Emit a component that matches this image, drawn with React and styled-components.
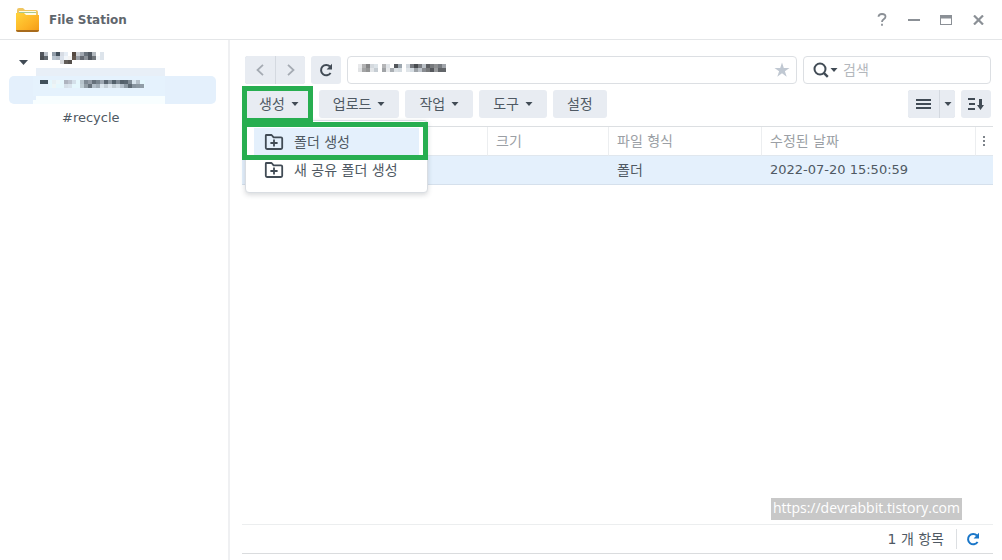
import React from "react";
import styled, { createGlobalStyle } from "styled-components";

const Global = createGlobalStyle`
  *, *::before, *::after { box-sizing: border-box; }
  body {
    margin: 0;
    background: #fff;
    color: #4f5963;
    font-family: "DejaVu Sans", "Noto Sans CJK KR", sans-serif;
    font-size: 14px;
    line-height: 20px;
  }
  button, input { font: inherit; color: inherit; margin: 0; }
  button { border: 0; padding: 0; background: none; cursor: pointer; }
  svg { display: block; flex: none; }
`;

const Window = styled.div`
  min-height: 100vh;
  display: flex;
  flex-direction: column;
`;

const TitleBar = styled.header`
  display: flex;
  align-items: center;
  height: 40px;
  padding: 0 8px 0 15px;
  border-bottom: 1px solid #e4e6e8;
`;

const Title = styled.h1`
  margin: 0 auto 0 10px;
  font-size: 12px;
  font-weight: bold;
  color: #5f666d;
`;

const WindowButton = styled.button`
  display: flex;
  align-items: center;
  justify-content: center;
  width: 32px;
  height: 32px;
  color: #8b9096;
`;

const Body = styled.div`
  flex: 1;
  display: flex;
`;

const Sidebar = styled.nav`
  flex: none;
  width: 230px;
  padding: 8px 12px 0 9px;
  border-right: 2px solid #eff0f2;
`;

const TreeList = styled.ul`
  list-style: none;
  margin: 0;
  padding: 0;
`;

const TreeItem = styled.a`
  position: relative;
  display: flex;
  align-items: center;
  height: 28px;
  padding-left: ${(p) => p.$indent}px;
  border-radius: 5px;
  background: ${(p) => (p.$selected ? "#e4f0fc" : "transparent")};
  color: #4f5963;
  font-size: 13px;
  text-decoration: none;
`;

const TreeCaret = styled.span`
  display: flex;
  width: 21px;
`;

const TreeName = styled.span`
  position: relative;
  padding-bottom: ${(p) => p.$lift}px;
`;

const Veil = styled.svg`
  position: absolute;
  left: 24px;
  bottom: 0;
`;

const Main = styled.main`
  flex: 1;
  min-width: 0;
  display: flex;
  flex-direction: column;
  padding: 16px 9px 6px 12px;
`;

const Toolbars = styled.div`
  display: grid;
  gap: 6px;
  padding: 0 2px 8px 3px;
`;

const Toolbar = styled.div`
  display: flex;
  gap: 6px;
  height: 28px;
`;

const Group = styled.div`
  display: flex;
  gap: 1px;
  border-radius: 3px;
  overflow: hidden;
  background: #d4d9e0;
  margin-left: ${(p) => (p.$end ? "auto" : "0")};
`;

const IconButton = styled.button`
  display: flex;
  align-items: center;
  justify-content: center;
  width: ${(p) => p.$width || 30}px;
  height: 28px;
  background: #e8ecf2;
  border-radius: ${(p) => (p.$grouped ? 0 : 3)}px;
  color: ${(p) => (p.$muted ? "#a5abb3" : "#414b55")};
`;

const ToolButton = styled.button`
  display: flex;
  align-items: center;
  gap: 6px;
  height: 28px;
  padding: 0 14px;
  border-radius: 3px;
  background: #e8ecf2;
  white-space: nowrap;
`;

const Field = styled.div`
  display: flex;
  align-items: center;
  height: 28px;
  min-width: 0;
  border: 1px solid #dcdfe3;
  border-radius: 4px;
  flex: ${(p) => (p.$fixed ? "0 0 188px" : "1")};
  padding: ${(p) => (p.$fixed ? "0 6px 0 9px" : "0 6px 0 8px")};
`;

const PathName = styled.span`
  padding: 0 0 4px 2px;
`;

const SearchCaret = styled.span`
  padding-left: 1px;
`;

const TextInput = styled.input`
  flex: 1;
  min-width: 0;
  height: 24px;
  padding: 0 0 0 5px;
  border: 0;
  outline: 0;
  background: transparent;
  &::placeholder { color: #b3b7bc; opacity: 1; }
`;

const MenuAnchor = styled.div`
  position: relative;
`;

const Menu = styled.ul`
  position: absolute;
  z-index: 2;
  top: 30px;
  left: 0;
  width: 183px;
  margin: 0;
  padding: 7px 8px 8px;
  list-style: none;
  background: #fff;
  border: 1px solid #d9dde2;
  border-radius: 4px;
  box-shadow: 0 2px 5px rgba(60, 70, 80, 0.2);
`;

const MenuItem = styled.button`
  display: flex;
  align-items: center;
  gap: 10px;
  width: 100%;
  height: 28px;
  padding-left: 10px;
  background: ${(p) => (p.$active ? "#e4f0fc" : "transparent")};
  white-space: nowrap;
`;

const Highlight = styled.span`
  position: absolute;
  z-index: 3;
  top: ${(p) => p.$top}px;
  left: -3px;
  width: ${(p) => p.$width}px;
  height: ${(p) => p.$height}px;
  border: 5px solid #27ae50;
  pointer-events: none;
`;

const FileTable = styled.table`
  width: 100%;
  table-layout: fixed;
  border-collapse: separate;
  border-spacing: 0;
  border-top: 1px solid #dcdfe2;
`;

const HeadCell = styled.th`
  width: ${(p) => (p.$width ? p.$width + "px" : "auto")};
  height: 29px;
  padding: 0 0 0 8px;
  border-right: ${(p) => (p.$last ? "0" : "1px solid #eceef0")};
  border-bottom: 1px solid #e0e7ee;
  font-weight: normal;
  text-align: left;
  color: #9b9fa5;
`;

const Cell = styled.td`
  height: 29px;
  padding: 0 0 0 8px;
  background: #e4f0fc;
  border-bottom: 1px solid #d5e0ec;
  font-size: ${(p) => (p.$numeric ? 13 : 14)}px;
`;

const MoreButton = styled.button`
  display: flex;
  width: 8px;
  height: 20px;
  align-items: center;
  color: #7d838a;
  margin-left: -4px;
`;

const Watermark = styled.a`
  align-self: flex-end;
  margin: auto 31px 4px 0;
  padding: 0 2px;
  height: 22px;
  background: #c8c8c8;
  color: #fff;
  font-family: "Open Sans", sans-serif;
  font-size: 14px;
  text-decoration: none;
`;

const Footer = styled.footer`
  display: flex;
  align-items: center;
  justify-content: flex-end;
  height: 30px;
  border-top: 1px solid #eceeef;
  border-bottom: 1px solid #dadcde;
`;

const Count = styled.span`
  padding-right: 12px;
  border-right: 1px solid #dcdfe2;
`;

const RefreshButton = styled.button`
  display: flex;
  align-items: center;
  justify-content: center;
  width: 32px;
  height: 24px;
  margin-right: 4px;
  color: #1976c8;
`;

const Caret = () => (
  <svg width="8" height="4" viewBox="0 0 8 4" fill="#414b55" aria-hidden="true">
    <path d="M.5 0h7L4 4z" />
  </svg>
);

const Reload = () => (
  <svg width="16" height="16" viewBox="0 0 16 16" fill="none" aria-hidden="true">
    <path d="M12.6 11A5.2 5.2 0 1 1 12 4.5" stroke="currentColor" strokeWidth="2" />
    <path d="M14 1.8v5.6H8.6z" fill="currentColor" />
  </svg>
);

const FolderPlus = () => (
  <svg width="20" height="18" viewBox="0 0 20 18" fill="none" stroke="#414b55" strokeWidth="1.8" aria-hidden="true">
    <path d="M2 2h5.6l2 2.3H17q1.2 0 1.2 1.2v9.3q0 1.2-1.2 1.2H3q-1.2 0-1.2-1.2V2.6Q1.8 2 2.4 2z" strokeLinejoin="round" />
    <path d="M10 6.400v7.200M6.400 10h7.200" />
  </svg>
);

const FolderLogo = () => (
  <svg width="24" height="24" viewBox="0 0 24 24" aria-hidden="true">
    <defs>
      <linearGradient id="folderFront" x1="0" y1="0" x2="1" y2="1">
        <stop offset="0" stopColor="#ffd43b" />
        <stop offset=".6" stopColor="#fdb325" />
        <stop offset="1" stopColor="#f29a16" />
      </linearGradient>
    </defs>
    <path d="M2 2q0-2 2-2h4l2 2h11q2 0 2 2v8H2z" fill="#f0c661" />
    <path d="M4 3h17v5H4z" fill="#fffbe6" />
    <path d="M4 4.500h17" stroke="#a9c98c" strokeWidth="1" />
    <path d="M1 5h8l2 2h13v15q0 1.500-1.500 1.500h-20Q1 23.500 1 22z" fill="url(#folderFront)" />
    <path d="M1 22h23q0 2-2 2H3q-2 0-2-2z" fill="#a86b1c" />
  </svg>
);

const BLOCK = 4;
const Mosaic = ({ rows, label }) => (
  <svg
    role="img"
    aria-label={label}
    width={rows[0].length * BLOCK}
    height={rows.length * BLOCK}
    shapeRendering="crispEdges"
  >
    {rows.flatMap((row, y) =>
      row.map((c, x) =>
        c ? (
          <rect key={`${x}-${y}`} x={x * BLOCK} y={y * BLOCK} width={BLOCK} height={BLOCK} fill={`#${c}`} />
        ) : null
      )
    )}
  </svg>
);

const VOLUME = [
  ["50545b", "bbc1c9", 0, "929da9", "43505c", "d7dce4", "e6edf5", 0, "55483f", "cdd1d6", "a1a8b1", "6a737c", "505861", "b2b8be", 0, "dde4eb"],
  ["4b4e53", "60676e", 0, "b9c4cf", "b1bac4", "dbe2ec", "f2f6fa", "f4f4f4", "61554c", "9ba0a7", "646971", "8b9198", "4f555d", "6f7479", "f3f6f9", "dde4eb"],
  [0, 0, 0, 0, 0, "d8dadd", "625d58", "55504c", 0, 0, 0, 0, 0, 0, 0, 0],
];

const FOLDER = [
  ["40505b", "40505b", 0, "e8f0f4", "ecf6fa", 0, "aeb4bf", "bcc3ce", "d4e0ea", 0, "b7c4cc", "7e8993", "929ba5", "65707a", "79858f", "9ea8b3", "596570", "8995a0", "52606b", "7c8893", "53606a", "586570", "7f8b95", "d8e4ed", "b5c0ca", 0],
  [0, 0, 0, "eef5f6", 0, 0, "d5dfe8", "d9e4ed", 0, 0, "bdcbd2", "929da5", "67727b", "b2bec8", "a2aeb8", "dbe6ee", "c3ced7", "dce6ef", "c2ced6", "d2dee7", "b4c0cb", "8e9ba5", "5d6973", "87939e", "8c98a2", "919da7"],
];

const PATH = [
  ["e8e9eb", "b1b1b2", "858586", "d4d9de", "dce3e8", 0, "b5b6b8", "e1e5e9", 0, "53565b", "9ca6ae", 0, "d1d7dd", "777a80", "494c50", "7b7e83", "bac0c6", "5d5f62", "777a7d", "8d8f91", "767a7f", "a0a4aa"],
  ["e0e2e4", "a3a4a5", "949595", "e2e5e8", "c6cdd3", 0, "a0a3a6", "e8eaec", "a9aeb3", "dce1e5", "d5dce1", 0, "e0e5e9", "d5dce2", "9da2a7", "bec4cb", "888b90", "77797b", "55585c", "989a9c", "616468", "626569"],
];

const TOOLS = [
  { label: "업로드", menu: true },
  { label: "작업", menu: true },
  { label: "도구", menu: true },
  { label: "설정", menu: false },
];

export default function App() {
  return (
    <Window>
      <Global />
      <TitleBar>
        <FolderLogo />
        <Title>File Station</Title>
        <WindowButton aria-label="도움말">
          <svg width="10" height="13" viewBox="0 0 10 13" fill="none" stroke="currentColor" strokeWidth="1.8">
            <path d="M1.500 3.800Q1.500 1 5 1t3.500 2.700Q8.500 5 6.700 6.200 5 7.300 5 9" />
            <path d="M5 10.800v2" />
          </svg>
        </WindowButton>
        <WindowButton aria-label="최소화">
          <svg width="12" height="2" fill="currentColor"><path d="M0 0h12v2H0z" /></svg>
        </WindowButton>
        <WindowButton aria-label="최대화">
          <svg width="12" height="10" viewBox="0 0 12 10" fill="currentColor">
            <path fillRule="evenodd" d="M0 0h12v10H0zM1 3.500v5.500h10V3.500z" />
          </svg>
        </WindowButton>
        <WindowButton aria-label="닫기">
          <svg width="11" height="10" viewBox="0 0 11 10" fill="none" stroke="currentColor" strokeWidth="2.2">
            <path d="M1 .5l9 9M10 .5l-9 9" />
          </svg>
        </WindowButton>
      </TitleBar>
      <Body>
        <Sidebar>
          <TreeList>
            <li>
              <TreeItem href="#volume" $indent={10}>
                <TreeCaret>
                  <svg width="9" height="5" viewBox="0 0 9 5" fill="#414b55"><path d="M0 0h9L4.500 5z" /></svg>
                </TreeCaret>
                <TreeName $lift={8}><Mosaic rows={VOLUME} label="볼륨" /></TreeName>
              </TreeItem>
            </li>
            <li>
              <TreeItem href="#folder" $indent={31} $selected>
                <Veil width="132" height="36" shapeRendering="crispEdges" aria-hidden="true">
                  <path d="M3 0h129v8H3z" fill="#e8eff7" />
                  <path d="M0 8h132v20H0z" fill="#e5f2fd" />
                  <path d="M16 12h96v8H16z" fill="#e5f7fd" />
                  <path d="M0 32h3v-4h129v8H0z" fill="#f8feff" />
                </Veil>
                <TreeName $lift={12}><Mosaic rows={FOLDER} label="폴더" /></TreeName>
              </TreeItem>
            </li>
            <li>
              <TreeItem href="#recycle" $indent={53}>#recycle</TreeItem>
            </li>
          </TreeList>
        </Sidebar>
        <Main>
          <Toolbars>
            <Toolbar>
              <Group>
                <IconButton $grouped $muted aria-label="뒤로">
                  <svg width="8" height="12" viewBox="0 0 8 12" fill="none" stroke="currentColor" strokeWidth="1.8"><path d="M7 .8L1.500 6 7 11.200" /></svg>
                </IconButton>
                <IconButton $grouped $muted $width={29} aria-label="앞으로">
                  <svg width="8" height="12" viewBox="0 0 8 12" fill="none" stroke="currentColor" strokeWidth="1.8"><path d="M1 .8L6.500 6 1 11.200" /></svg>
                </IconButton>
              </Group>
              <IconButton aria-label="새로 고침"><Reload /></IconButton>
              <Field>
                <PathName><Mosaic rows={PATH} label="현재 경로" /></PathName>
                <TextInput aria-label="경로" />
                <button aria-label="즐겨찾기">
                  <svg width="16" height="16" viewBox="0 0 16 16" fill="#c0c8d2">
                    <path d="M8 .6l1.800 5.300h5.700l-4.600 3.300 1.800 5.500L8 11.300l-4.700 3.400 1.800-5.500L.5 5.900h5.700z" />
                  </svg>
                </button>
              </Field>
              <Field $fixed>
                <svg width="16" height="16" viewBox="0 0 16 16" fill="none" stroke="#414b55" strokeWidth="2">
                  <circle cx="7" cy="7" r="5.5" /><path d="M10.800 10.800l4 4" strokeWidth="2.4" />
                </svg>
                <SearchCaret><Caret /></SearchCaret>
                <TextInput type="search" placeholder="검색" aria-label="검색" />
              </Field>
            </Toolbar>
            <Toolbar>
              <MenuAnchor>
                <ToolButton>생성<Caret /></ToolButton>
                <Highlight $top={-4} $width={71} $height={37} />
                <Menu>
                  <li><MenuItem $active><FolderPlus />폴더 생성</MenuItem></li>
                  <li><MenuItem><FolderPlus />새 공유 폴더 생성</MenuItem></li>
                </Menu>
                <Highlight $top={32} $width={186} $height={38} />
              </MenuAnchor>
              {TOOLS.map((t) => (
                <ToolButton key={t.label}>
                  {t.label}
                  {t.menu && <Caret />}
                </ToolButton>
              ))}
              <Group $end>
                <IconButton $grouped $width={31} aria-label="목록 보기">
                  <svg width="15" height="10" fill="currentColor"><path d="M0 0h15v2H0zM0 4h15v2H0zM0 8h15v2H0z" /></svg>
                </IconButton>
                <IconButton $grouped $width={15} aria-label="보기 옵션"><Caret /></IconButton>
              </Group>
              <IconButton aria-label="정렬">
                <svg width="16" height="12" viewBox="0 0 16 12" fill="currentColor">
                  <path d="M0 0h7v2H0zM1 5h6v2H1zM0 10h7v2H0zM11 1h3v6h2l-3.500 5L9 7h2z" />
                </svg>
              </IconButton>
            </Toolbar>
          </Toolbars>
          <FileTable>
            <thead>
              <tr>
                <HeadCell $width={246}>이름</HeadCell>
                <HeadCell $width={121}>크기</HeadCell>
                <HeadCell $width={153}>파일 형식</HeadCell>
                <HeadCell>수정된 날짜</HeadCell>
                <HeadCell $width={17} $last>
                  <MoreButton aria-label="열 선택">
                    <svg width="8" height="12" fill="currentColor"><path d="M3 1h2v2H3zM3 5h2v2H3zM3 9h2v2H3z" /></svg>
                  </MoreButton>
                </HeadCell>
              </tr>
            </thead>
            <tbody>
              <tr>
                <Cell />
                <Cell />
                <Cell>폴더</Cell>
                <Cell $numeric>2022-07-20 15:50:59</Cell>
                <Cell />
              </tr>
            </tbody>
          </FileTable>
          <Watermark href="#blog">https://devrabbit.tistory.com</Watermark>
          <Footer>
            <Count>1 개 항목</Count>
            <RefreshButton aria-label="목록 새로 고침"><Reload /></RefreshButton>
          </Footer>
        </Main>
      </Body>
    </Window>
  );
}
